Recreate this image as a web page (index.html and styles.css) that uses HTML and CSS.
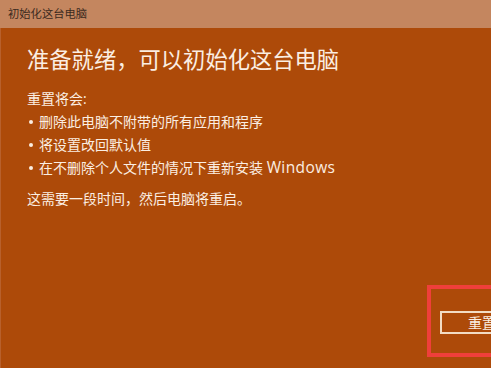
FILE: index.html
```html
<!DOCTYPE html>
<html lang="zh-CN">
<head>
<meta charset="utf-8">
<title>初始化这台电脑</title>
<link rel="stylesheet" href="styles.css">
</head>
<body>
<div class="window">
  <div class="titlebar">初始化这台电脑</div>
  <div class="content">
    <h1 class="heading">准备就绪，可以初始化这台电脑</h1>
    <p class="label">重置将会:</p>
    <ul class="list">
      <li>删除此电脑不附带的所有应用和程序</li>
      <li>将设置改回默认值</li>
      <li><span>在不删除个人文件的情况下重新安装 <span class="brand">Windows</span></span></li>
    </ul>
    <p class="note">这需要一段时间，然后电脑将重启。</p>
    <div class="actions">
      <div class="highlight">
        <button class="btn">重置</button>
      </div>
    </div>
  </div>
</div>
</body>
</html>
```
FILE: styles.css
```css
html, body {
  margin: 0;
  padding: 0;
  width: 491px;
  height: 368px;
  overflow: hidden;
  background: #ad4a09;
}
.window {
  display: flex;
  flex-direction: column;
  height: 368px;
  font-family: "Open Sans", "Noto Sans CJK SC", sans-serif;
}
.titlebar {
  height: 28px;
  box-sizing: border-box;
  background: #c4865f;
  color: #3b2a20;
  font-size: 11.3px;
  line-height: 28px;
  padding-left: 8px;
}
.content {
  flex: 1;
  display: flex;
  flex-direction: column;
  padding: 0 0 0 27px;
  color: #fbeee2;
  border-left: 1px solid #b8602c;
}
.heading {
  margin: 17px 0 0 -1px;
  font-size: 22.3px;
  font-weight: 400;
  line-height: 30px;
}
.label {
  margin: 12px 0 0 -1px;
  font-size: 14px;
  line-height: 23px;
}
.list {
  list-style: none;
  margin: 0;
  padding: 0;
  font-size: 14px;
  line-height: 23px;
}
.list li {
  display: flex;
  align-items: center;
  gap: 6px;
}
.list li::before {
  content: "";
  width: 4px;
  height: 4px;
  border-radius: 50%;
  background: #fbeee2;
  margin-left: 1px;
}
.brand {
  font-size: 15.5px;
  letter-spacing: 0.4px;
}
.note {
  margin: 8px 0 0 -1px;
  font-size: 14px;
  line-height: 23px;
}
.actions {
  flex: 1;
  display: flex;
  justify-content: flex-end;
  align-items: flex-start;
  padding-top: 75px;
}
.highlight {
  width: 64px;
  height: 72px;
  box-sizing: border-box;
  border: 4px solid #ef3f3b;
  border-right: none;
  padding: 22px 0 0 9px;
}
.btn {
  display: block;
  width: 70px;
  height: 23px;
  box-sizing: border-box;
  border: 2px solid #f3dcc3;
  background: transparent;
  color: #fbeee2;
  font-family: "Open Sans", "Noto Sans CJK SC", sans-serif;
  font-size: 14px;
  line-height: 17px;
  padding: 0 0 0 26px;
  text-align: left;
  white-space: nowrap;
}
```
